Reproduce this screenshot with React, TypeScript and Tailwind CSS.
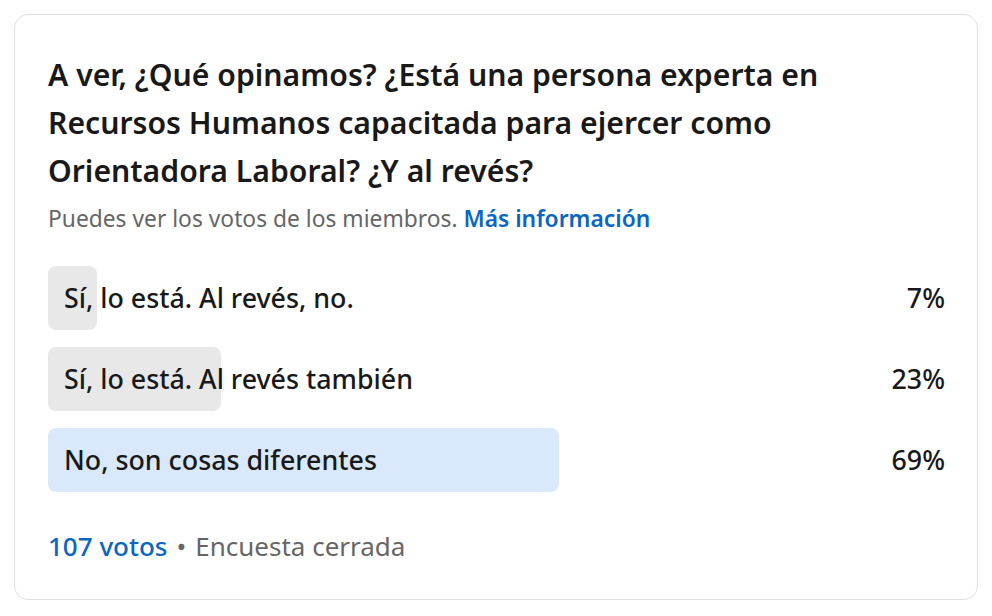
import React from "react";

type Option = { label: string; pct: number; width: number; winner?: boolean };

const options: Option[] = [
  { label: "Sí, lo está. Al revés, no.", pct: 7, width: 49 },
  { label: "Sí, lo está. Al revés también", pct: 23, width: 173 },
  { label: "No, son cosas diferentes", pct: 69, width: 511, winner: true },
];

export default function App() {
  return (
    <div className="w-[992px] h-[616px] bg-white p-[14px] font-['Noto_Sans',sans-serif] text-[#191919]">
      <div className="w-[964px] h-[586px] rounded-[14px] border border-[#e0e0e0] pl-[33px] pr-[32px] pt-[36px]">
        <h2 className="text-[30.2px] leading-[48px] font-semibold">
          A ver, ¿Qué opinamos? ¿Está una persona experta en
          <br />
          Recursos Humanos capacitada para ejercer como
          <br />
          Orientadora Laboral? ¿Y al revés?
        </h2>
        <p className="mt-[9px] text-[22.8px] leading-[30px] text-[#666666]">
          Puedes ver los votos de los miembros.{" "}
          <span className="font-semibold text-[#0a66c2]">Más información</span>
        </p>

        <div className="mt-[32px] flex flex-col gap-[17px]">
          {options.map((o) => (
            <div key={o.label} className="relative flex h-[64px] items-center justify-between">
              <div
                className={`absolute left-0 top-0 h-full rounded-[8px] ${o.winner ? "bg-[#d9e8fa]" : "bg-[#e8e8e8]"}`}
                style={{ width: o.width }}
              />
              <span className="relative pl-[16px] text-[26.8px] font-medium">{o.label}</span>
              <span className="relative text-[26.8px] font-medium">{o.pct}%</span>
            </div>
          ))}
        </div>

        <div className="mt-[38px] text-[26px] leading-[32px] text-[#666666]">
          <span className="font-medium text-[#0a66c2]">107 votos</span>
          <span className="mx-[9px]">•</span>
          <span>Encuesta cerrada</span>
        </div>
      </div>
    </div>
  );
}
